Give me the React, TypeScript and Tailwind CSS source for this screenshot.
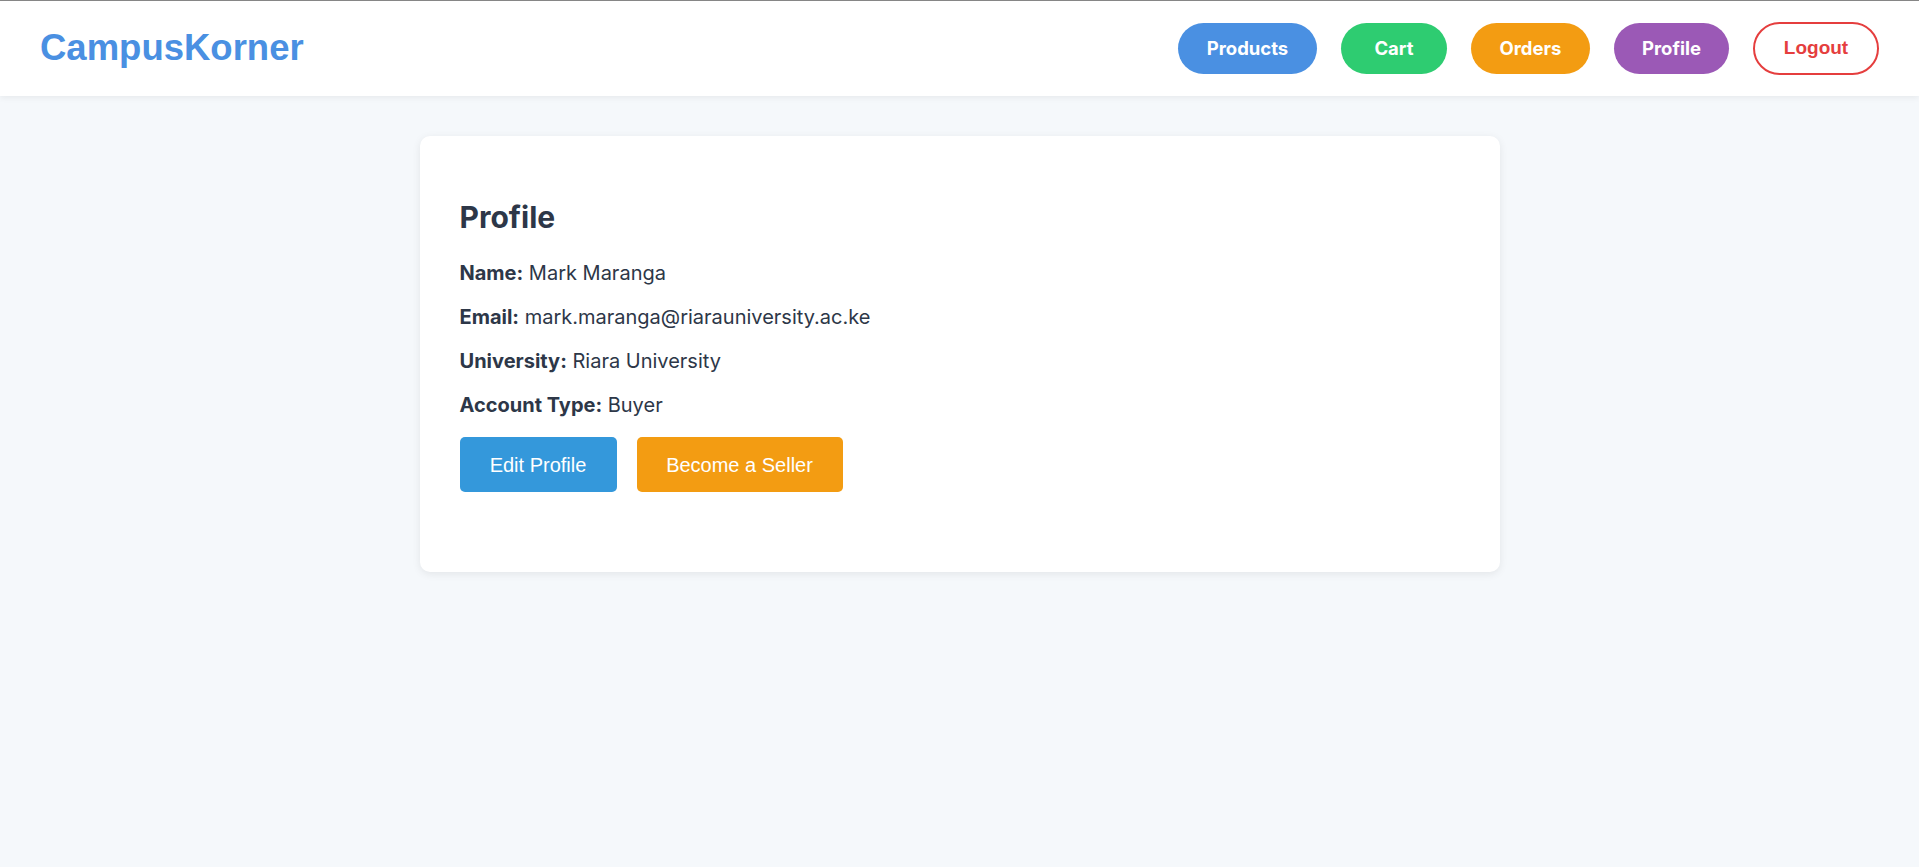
import React from "react";

export default function App() {
  const navBtn =
    "flex items-center justify-center h-[51px] rounded-full text-white text-[18.5px] font-bold";
  return (
    <div className="min-h-[867px] bg-[#f5f8fb] border-t border-[#888888]" style={{ fontFamily: "Inter, 'Noto Sans', sans-serif" }}>
      <header className="h-[95px] bg-white flex items-center justify-between px-[40px] shadow-[0_2px_6px_rgba(0,0,0,0.06)] relative">
        <div className="text-[36.5px] font-bold text-[#4a90e2]" style={{ fontFamily: "'Liberation Sans', Arial, sans-serif" }}>
          CampusKorner
        </div>
        <nav className="flex items-center gap-[24px]">
          <div className={`${navBtn} w-[139px] bg-[#4a90e2]`}>Products</div>
          <div className={`${navBtn} w-[106px] bg-[#2ecc71]`}>Cart</div>
          <div className={`${navBtn} w-[119px] bg-[#f39c12]`}>Orders</div>
          <div className={`${navBtn} w-[115px] bg-[#9b59b6]`}>Profile</div>
          <div
            className="flex items-center justify-center w-[126px] h-[53px] rounded-full border-2 border-[#e53e3e] text-[#e53e3e] text-[19px] font-bold bg-white"
            style={{ fontFamily: "'Liberation Sans', Arial, sans-serif" }}
          >
            Logout
          </div>
        </nav>
      </header>
      <main className="flex justify-center pt-[40px]">
        <div className="w-[1080px] bg-white rounded-[10px] shadow-[0_2px_8px_rgba(0,0,0,0.08)] px-[40px] pt-[40px] pb-[80px] text-[#2d3748]">
          <h2 className="mt-[23px] text-[30px] leading-[36px] font-bold">Profile</h2>
          <div className="mt-[26px] flex flex-col gap-[20px] text-[20px] leading-[24px]">
            <p><span className="font-bold">Name:</span> Mark Maranga</p>
            <p><span className="font-bold">Email:</span> mark.maranga@riarauniversity.ac.ke</p>
            <p><span className="font-bold">University:</span> Riara University</p>
            <p><span className="font-bold">Account Type:</span> Buyer</p>
          </div>
          <div className="mt-[20px] flex gap-[20px]" style={{ fontFamily: "'Liberation Sans', Arial, sans-serif" }}>
            <button className="h-[55px] w-[157px] rounded-[5px] bg-[#3498db] text-white text-[20px]">Edit Profile</button>
            <button className="h-[55px] w-[206px] rounded-[5px] bg-[#f39c12] text-white text-[20px]">Become a Seller</button>
          </div>
        </div>
      </main>
    </div>
  );
}
